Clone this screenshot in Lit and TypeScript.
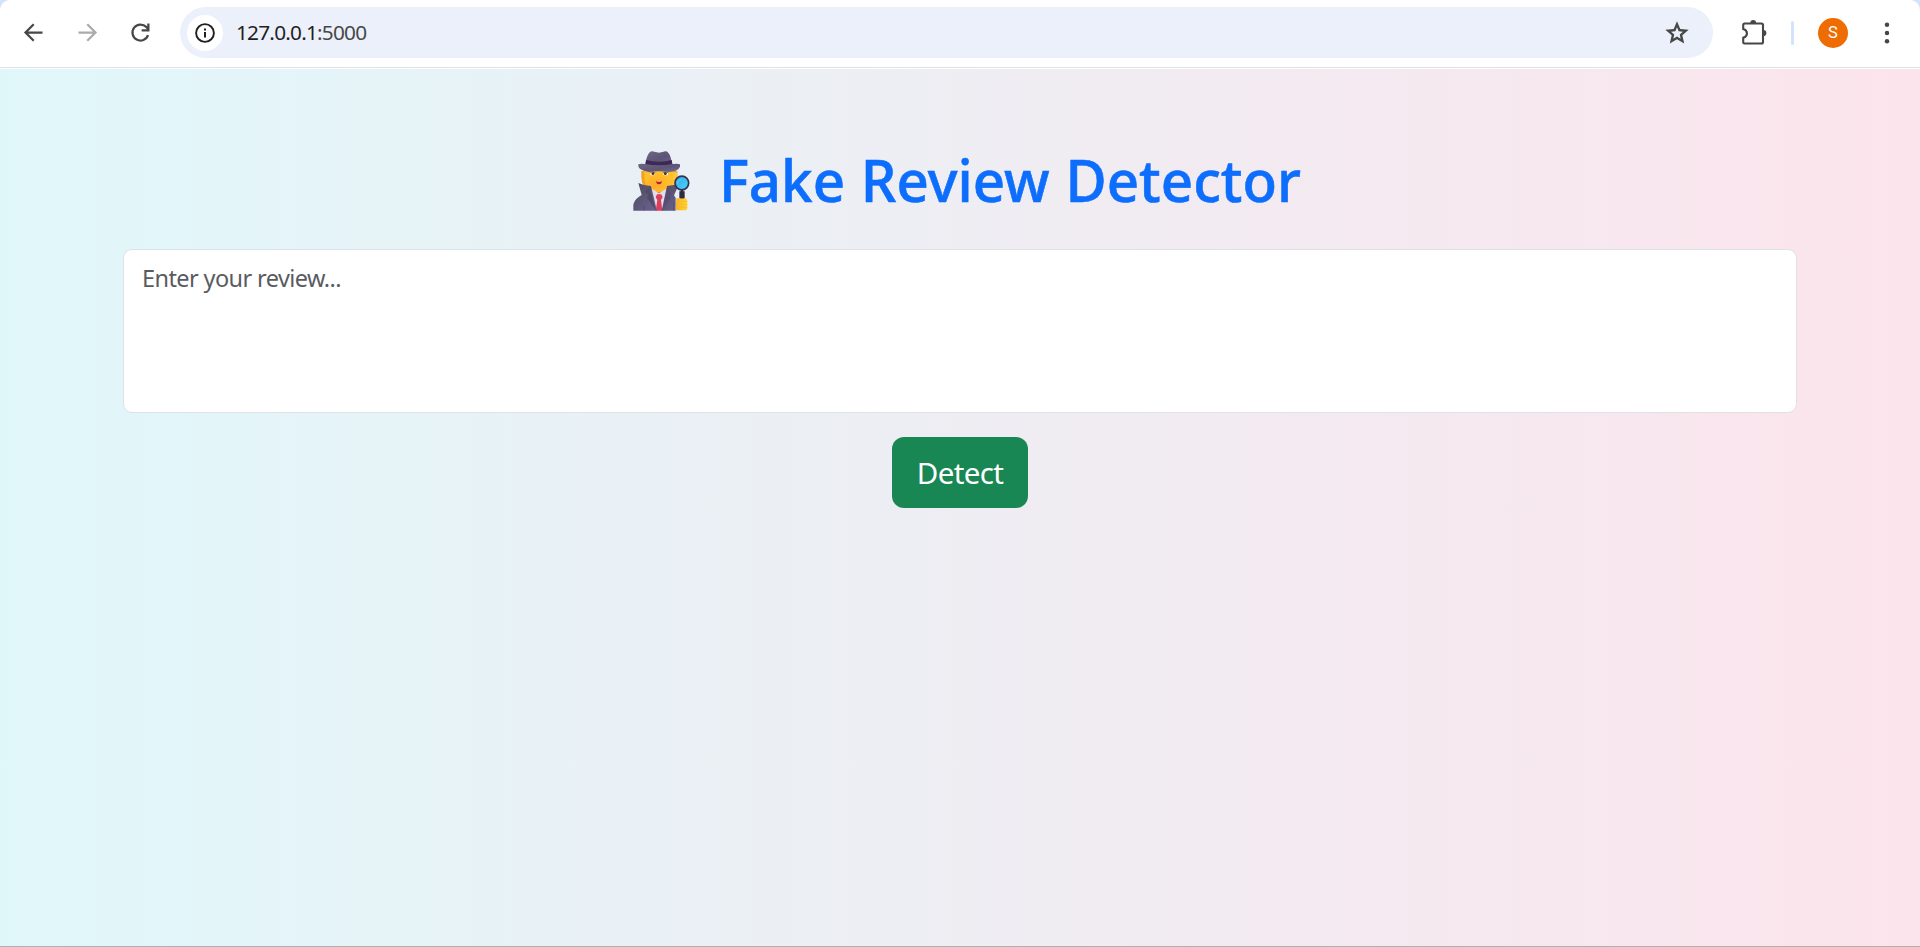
import { LitElement, html, css } from "lit";
import { customElement } from "lit/decorators.js";

@customElement("browser-bar")
class BrowserBar extends LitElement {
  static styles = css`
    :host { display: block; background: #d3e3fd; }
    svg { display: block; flex: none; }
    .bar {
      box-sizing: border-box; height: 69px; display: flex; align-items: center;
      padding: 0 0 4px 20px; background: #fff; border-radius: 10px 10px 0 0;
      box-shadow: inset 0 -1px #fff, inset 0 -2px #dfe2e5;
    }
    .nav { display: flex; gap: 26.5px; width: 160px; flex: none; }
    .address {
      box-sizing: border-box; width: 1533px; height: 51px; border-radius: 26px;
      background: #ecf0fa; display: flex; align-items: center; padding: 0 22px 0 7px; flex: none;
    }
    .site { width: 36px; height: 36px; border-radius: 50%; background: #fff; display: flex; align-items: center; justify-content: center; }
    .url { flex: 1; margin: 0 0 1px 13px; font: 20.8px/28px "Segoe UI", "Noto Sans", sans-serif; letter-spacing: -0.78px; color: #1f1f1f; }
    .port { color: #474747; }
    .ext { margin-left: 26px; }
    .divider { width: 3px; height: 24px; border-radius: 1.5px; background: #d3e3fd; margin-left: 22px; }
    .avatar { width: 30px; height: 30px; border-radius: 50%; background: #ee6c02; color: #fff; margin-left: 24px; text-align: center; font: 16.5px/30px Roboto, sans-serif; }
    .menu { margin-left: 29px; }
  `;
  render() {
    return html`
      <div class="bar">
        <div class="nav">
          <svg width="27" height="27" viewBox="0 0 24 24" fill="none" stroke="#474747" stroke-width="2"><path d="M20 12H5.4M12.2 4.7 4.9 12l7.3 7.3" /></svg>
          <svg width="27" height="27" viewBox="0 0 24 24" fill="none" stroke="#ababab" stroke-width="2"><path d="M4 12h14.6M11.8 4.7l7.3 7.3-7.3 7.3" /></svg>
          <svg width="27" height="27" viewBox="0 0 24 24" fill="none" stroke="#474747" stroke-width="2"><path d="M18.700 14.300A7.100 7.100 0 1 1 17.200 7.200L19 9.200M19 4v6.200H13" /></svg>
        </div>
        <div class="address">
          <div class="site">
            <svg width="20" height="20" viewBox="0 0 20 20"><circle cx="10" cy="10" r="8.9" fill="none" stroke="#1f1f1f" stroke-width="1.9" /><path d="M9 9h2v5.4H9zM9 5.5h2v2H9z" fill="#1f1f1f" /></svg>
          </div>
          <div class="url">127.0.0.1<span class="port">:5000</span></div>
          <svg width="28" height="28" viewBox="0 0 24 24" fill="#474747"><path d="m8.85 16.825 3.15-1.9 3.15 1.925-.825-3.6 2.775-2.4-3.65-.325-1.45-3.4-1.45 3.375-3.65.325 2.775 2.425zM5.825 21l1.625-7.025L2 9.25l7.2-.625L12 2l2.8 6.625 7.2.625-5.45 4.725L18.175 21 12 17.275z" /></svg>
        </div>
        <svg class="ext" width="30" height="30" viewBox="0 0 30 30"><path d="M5 5.5h17.500a1.500 1.500 0 0 1 1.500 1.500v17a1.500 1.500 0 0 1-1.500 1.500H5.400A1.300 1.300 0 0 1 4.200 24.200v-4.500c5-1.600 5-7 0-8.600V7Q4.200 5.500 5.700 5.500" fill="none" stroke="#474747" stroke-width="2.100" /><path d="M11.300 5.200a2.900 3.300 0 0 1 5.800 0zM24.300 12a3.100 3.100 0 0 1 0 6.200z" fill="#474747" /></svg>
        <div class="divider"></div>
        <div class="avatar">S</div>
        <svg class="menu" width="20" height="24" viewBox="0 0 20 24" fill="#474747"><circle cx="10" cy="3.700" r="2.250" /><circle cx="10" cy="12" r="2.250" /><circle cx="10" cy="20.300" r="2.250" /></svg>
      </div>
    `;
  }
}

@customElement("detective-icon")
class DetectiveIcon extends LitElement {
  static styles = css`:host, svg { display: block; }`;
  render() {
    return html`
      <svg width="57" height="60" viewBox="38 32 171 180" role="img">
        <defs>
          <linearGradient id="hat" x2="1" y2="1"><stop stop-color="#6d6685" /><stop offset=".55" stop-color="#5d5575" /><stop offset="1" stop-color="#6e6aa0" /></linearGradient>
          <linearGradient id="coat" x2="1" y2="1"><stop stop-color="#4d4860" /><stop offset=".5" stop-color="#5d5777" /><stop offset="1" stop-color="#6d6397" /></linearGradient>
          <radialGradient id="face" cx=".4" cy=".65"><stop stop-color="#ffa929" /><stop offset="1" stop-color="#ffc02c" /></radialGradient>
          <linearGradient id="glass" x2="1" y2="1"><stop stop-color="#2aa9e8" /><stop offset="1" stop-color="#50d5ff" /></linearGradient>
          <linearGradient id="hand"><stop stop-color="#fbaf22" /><stop offset="1" stop-color="#ffd733" /></linearGradient>
        </defs>
        <path d="M63 92h108v24q-2 23-17 28H75Q61 132 63 92z" fill="#f2a01e" />
        <path d="M154 96h17v21q-2 18-15 23z" fill="#ffc83a" />
        <path d="M95 137h43v20l-21 18-22-18z" fill="#df7a18" />
        <path d="M72 88h87v26c0 28-21 41-43 41s-44-14-44-42z" fill="url(#face)" />
        <path d="M96 146l20 13 20-13 12 65H84z" fill="#e2dded" />
        <path d="M110 162h13l4 9-5 8 4 32h-20l5-32-5-8z" fill="#df3e5b" />
        <path d="M54 128q16 8 38 9l18 74H39v-14q0-16 17-28l8-5z" fill="url(#coat)" />
        <path d="M178 128q-17 8-38 9l-16 74h42v-38l-5-8z" fill="url(#coat)" />
        <path d="M92 137q-4 12 1 25l14 49-27-39 4-10-12-7z" fill="#514b66" />
        <path d="M140 137l13 25-7 4 4 7-25 38 15-50z" fill="#574c78" />
        <path d="M71 196v15M160 184v27" stroke="#464058" stroke-width="1.500" />
        <path d="M75 77c2-28 11-43 20-44 6 0 12 4 21 4s14-4 20-4c10 1 17 17 20 44z" fill="url(#hat)" />
        <path d="M77 59q39 11 77 0l3 16q-41 12-82 0z" fill="#3e2855" />
        <path d="M54 72q6-3 20-1 42 8 84 0 15-2 21 1v7q-5 14-35 16-29-5-58 0-29-4-32-17z" fill="url(#hat)" />
        <ellipse cx="97" cy="100" rx="8" ry="4.500" fill="#fff" /><ellipse cx="136" cy="100" rx="8" ry="4.500" fill="#fff" />
        <circle cx="98" cy="99.500" r="4.500" fill="#51302b" /><circle cx="135" cy="99.500" r="4.500" fill="#51302b" />
        <path d="M88 98q8-6 17-1M128 97q8-5 17 1" stroke="#49302e" stroke-width="1.500" fill="none" />
        <path d="M106 123q10 4 20 0-3 9-10 9t-10-9z" fill="#b51e45" />
        <path d="M168 174h29q5 2 4 12v18q0 6-6 6h-29z" fill="url(#hand)" />
        <path d="M184 183h17M184 192h17M183 201h17" stroke="#f0b229" stroke-width="1.500" />
        <path d="M181 146h8v7h4v20q-7 3-16 0v-20h4z" fill="#302a40" />
        <circle cx="184.500" cy="128" r="20.500" fill="url(#glass)" stroke="#39304f" stroke-width="5" />
        <path d="M171 130q1-12 12-13" fill="none" stroke="#8ddefd" stroke-width="2.500" opacity=".6" />
      </svg>
    `;
  }
}

@customElement("app-root")
class AppRoot extends LitElement {
  static styles = css`
    :host {
      box-sizing: border-box; display: flex; flex-direction: column; height: 947px; overflow: hidden;
      font-family: "Segoe UI", "Noto Sans", sans-serif;
      background: linear-gradient(to right, #e0f7fa, #fce4ec);
      border-bottom: 1px solid #a9b5ac;
    }
    main { display: flex; flex-direction: column; align-items: center; padding: 76px 123px 0; }
    .title { display: flex; align-items: center; width: 655px; height: 72px; }
    .title h1 {
      margin: 0 0 4px 29.5px; font-size: 58.8px; line-height: 72px; font-weight: 500; color: #0d6efd; white-space: nowrap;
      -webkit-text-stroke: 0.6px #0d6efd; word-spacing: 1.2px; transform: scaleX(0.96); transform-origin: left;
    }
    textarea {
      box-sizing: border-box; display: block; width: 1674px; height: 164px; margin-top: 32px; padding: 10px 18px;
      border: 1px solid #dee2e6; border-radius: 9px; background: #fff; resize: none; outline: none;
      font: 23.5px/36px "Segoe UI", "Noto Sans", sans-serif; letter-spacing: -0.6px;
    }
    textarea::placeholder { color: #595c5f; opacity: 1; }
    button {
      width: 136px; height: 71px; margin-top: 24px; padding: 1px 0 0; border: 0; border-radius: 12px; background: #198754; color: #fff;
      font: 29.5px/70px "Segoe UI", "Noto Sans", sans-serif; letter-spacing: -0.65px;
    }
  `;
  render() {
    return html`
      <browser-bar></browser-bar>
      <main>
        <div class="title"><detective-icon></detective-icon><h1>Fake Review Detector</h1></div>
        <textarea placeholder="Enter your review..."></textarea>
        <button>Detect</button>
      </main>
    `;
  }
}
